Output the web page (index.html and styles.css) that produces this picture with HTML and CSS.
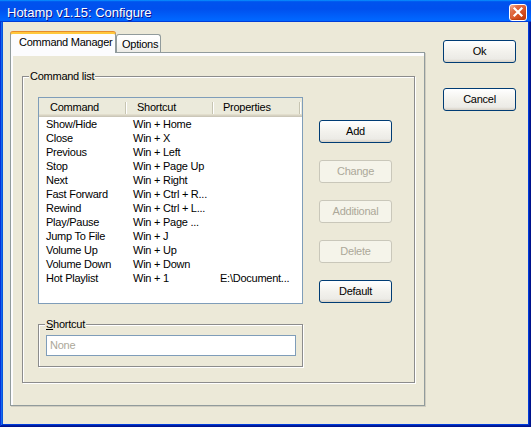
FILE: index.html
```html
<!DOCTYPE html>
<html>
<head>
<meta charset="utf-8">
<title>Hotamp v1.15: Configure</title>
<link rel="stylesheet" href="styles.css">
</head>
<body>
<div class="window">
  <div class="titlebar">
    <span class="title">Hotamp v1.15: Configure</span>
    <span class="close">
      <svg width="18" height="17" viewBox="0 0 18 17"><path d="M5.5 4.5 L12.5 11.5 M12.5 4.5 L5.5 11.5" stroke="#fff" stroke-width="2.2" stroke-linecap="square" fill="none"/></svg>
    </span>
  </div>
  <div class="client">
    <div class="tabs">
      <div class="tabstrip">
        <div class="tab active">Command Manager</div>
        <div class="tab options">Options</div>
      </div>
      <div class="pane">
        <fieldset class="group cmdlist">
          <legend>Command list</legend>
          <div class="cmd-body">
            <div class="leftcol">
              <div class="listview">
                <div class="lv-header">
                  <div class="hcell c1">Command</div>
                  <div class="hcell c2">Shortcut</div>
                  <div class="hcell c3">Properties</div>
                </div>
                <div class="lv-body">
                  <span>Show/Hide</span><span>Win + Home</span><span></span>
                  <span>Close</span><span>Win + X</span><span></span>
                  <span>Previous</span><span>Win + Left</span><span></span>
                  <span>Stop</span><span>Win + Page Up</span><span></span>
                  <span>Next</span><span>Win + Right</span><span></span>
                  <span>Fast Forward</span><span>Win + Ctrl + R...</span><span></span>
                  <span>Rewind</span><span>Win + Ctrl + L...</span><span></span>
                  <span>Play/Pause</span><span>Win + Page ...</span><span></span>
                  <span>Jump To File</span><span>Win + J</span><span></span>
                  <span>Volume Up</span><span>Win + Up</span><span></span>
                  <span>Volume Down</span><span>Win + Down</span><span></span>
                  <span>Hot Playlist</span><span>Win + 1</span><span>E:\Document...</span>
                </div>
              </div>
              <fieldset class="group shortcut">
                <legend><u>S</u>hortcut</legend>
                <div class="input">None</div>
              </fieldset>
            </div>
            <div class="btncol">
              <button class="btn">Add</button>
              <button class="btn disabled">Change</button>
              <button class="btn disabled">Additional</button>
              <button class="btn disabled">Delete</button>
              <button class="btn">Default</button>
            </div>
          </div>
        </fieldset>
      </div>
    </div>
    <div class="side">
      <button class="btn">Ok</button>
      <button class="btn">Cancel</button>
    </div>
  </div>
</div>
</body>
</html>
```
FILE: styles.css
```css
* { box-sizing: border-box; }
html, body { margin: 0; padding: 0; }
body {
  width: 531px;
  height: 427px;
  overflow: hidden;
  font-family: "Liberation Sans", Arial, sans-serif;
  font-size: 11px;
  letter-spacing: -0.25px;
  color: #000;
  background: #ece9d8;
}
.window {
  width: 531px;
  height: 427px;
  display: flex;
  flex-direction: column;
  padding: 0 3px 3px;
  background: #ece9d8;
  box-shadow: inset -1px -1px #00138c, inset 1px 1px #0831d9, inset -2px -2px #001ea0,
              inset 2px 2px #166aee, inset -3px -3px #003bda, inset 3px 3px #0855dd;
}
.titlebar {
  flex: none;
  margin: 0 -3px;
  height: 22px;
  display: flex;
  align-items: flex-start;
  justify-content: space-between;
  padding: 4px 4px 0 7px;
  background: linear-gradient(180deg, #0997ff, #0053ee 8%, #0050ee 40%, #0066ff 88%, #0066ff 93%, #005bff 95%, #003dd7 96%, #003dd7);
}
.title {
  color: #fff;
  font-size: 13px;
  line-height: 15px;
  letter-spacing: 0;
  text-shadow: 1px 1px #0f1089;
  padding-top: 1px;
}
.close {
  display: block;
  width: 18px;
  height: 17px;
  border: 1px solid #fff;
  border-radius: 3px;
  background: radial-gradient(circle at 85% 85%, #c63d0f 0%, #dc5a2c 50%, #e2724d 72%, #f6b49a 92%, #ffe4d8 100%);
  box-shadow: inset 0 -1px 2px #b8390a;
}
.close svg { display: block; margin: -1px 0 0 -1px; }
.client {
  flex: 1;
  display: flex;
  align-items: flex-start;
  padding: 9px 0 0 7px;
}
.tabs { width: 415px; flex: none; }
.tabstrip {
  display: flex;
  align-items: flex-end;
  height: 21px;
  position: relative;
  z-index: 1;
}
.tab {
  height: 18px;
  border: 1px solid #919b9c;
  border-bottom: 0;
  border-radius: 3px 3px 0 0;
  background: linear-gradient(180deg, #ffffff, #fcfcfb 40%, #ecebe6);
  padding: 2px 0 0 5px;
  line-height: 14px;
  white-space: nowrap;
}
.tab.options { width: 45px; }
.tab.active {
  width: 106px;
  height: 21px;
  margin-bottom: -1px;
  border-top: 2px solid #ffc83c;
  box-shadow: 0 -1px 0 #e68b2c;
  background: #fcfcfe;
  padding: 1px 0 0 8px;
}
.pane {
  height: 354px;
  border: 1px solid #919b9c;
  background: #ece9d8;
  box-shadow: inset 2px 3px #fcfcfe, 1px 1px 0 #d0cdc0;
  padding: 17px 10px 0 11px;
}
fieldset.group {
  margin: 0;
  padding: 0;
  min-width: 0;
  border: 1px solid #8c8c8c;
  box-shadow: inset 1px 1px #fff, 1px 1px #fff;
}
fieldset.group legend {
  padding: 0 1px;
  margin-left: 6px;
  line-height: 13px;
  background: #ece9d8;
}
fieldset.cmdlist { width: 393px; }
.cmd-body {
  display: flex;
  align-items: flex-start;
  padding: 14px 0 15px 15px;
}
.leftcol {
  width: 265px;
  flex: none;
  display: flex;
  flex-direction: column;
}
.listview {
  flex: 0 0 207px;
  height: 207px;
  border: 1px solid #7f9db9;
  background: #fff;
}
.lv-header {
  display: flex;
  height: 19px;
  background: #ebeadb;
  box-shadow: inset 0 -1px #cbc7b8, inset 0 -2px #d6d2c2, inset 0 -3px #e2decd;
}
.hcell {
  line-height: 19px;
  white-space: nowrap;
  background:
    linear-gradient(#c7c5b2, #c7c5b2) no-repeat right 1px top 4px / 1px 12px,
    linear-gradient(#ffffff, #ffffff) no-repeat right 0 top 4px / 1px 12px;
}
.hcell.c1 { width: 88px; padding-left: 11px; }
.hcell.c2 { width: 87px; padding-left: 10px; }
.hcell.c3 { width: 87px; padding-left: 9px; }
.lv-body {
  display: grid;
  grid-template-columns: 87px 87px 1fr;
  grid-auto-rows: 14px;
  line-height: 14px;
}
.lv-body span {
  padding-left: 7px;
  white-space: nowrap;
  overflow: hidden;
}
fieldset.shortcut {
  flex: none;
  margin-top: 14px;
  width: 265px;
}
.input {
  margin: 4px 0 10px 7px;
  width: 250px;
  height: 21px;
  border: 1px solid #7f9db9;
  background: #fff;
  color: #aca899;
  padding-left: 3px;
  line-height: 19px;
}
.btncol {
  flex: none;
  display: flex;
  flex-direction: column;
  gap: 17px;
  padding-top: 23px;
  margin-left: 16px;
}
.btn {
  display: block;
  margin: 0;
  padding: 0;
  width: 73px;
  height: 23px;
  border: 1px solid #003c74;
  border-radius: 3px;
  background: linear-gradient(180deg, #ffffff, #f3f2ed 50%, #ecebe6 86%, #d6d0c5);
  font: inherit;
  letter-spacing: inherit;
  color: #000;
  text-align: center;
  line-height: 21px;
}
.btn.disabled {
  border-color: #c9c7ba;
  background: #f5f4ea;
  color: #aca899;
}
.side {
  flex: none;
  margin-left: 18px;
  margin-top: 9px;
  display: flex;
  flex-direction: column;
  gap: 25px;
}
```
